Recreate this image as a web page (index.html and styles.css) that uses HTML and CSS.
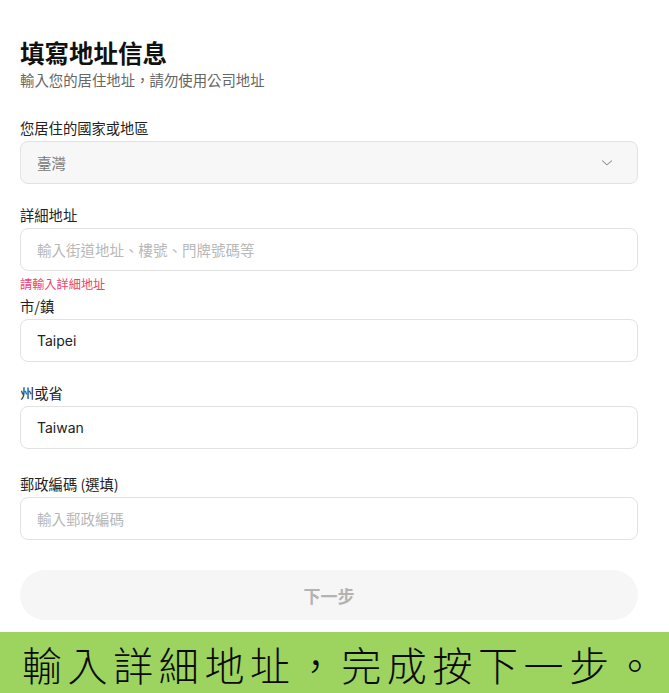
FILE: index.html
```html
<!DOCTYPE html>
<html lang="zh-Hant">
<head>
<meta charset="utf-8">
<title>填寫地址信息</title>
<link rel="stylesheet" href="styles.css">
</head>
<body>
<main class="page">
  <h1 class="title">填寫地址信息</h1>
  <p class="subtitle">輸入您的居住地址，請勿使用公司地址</p>

  <div class="field field-first">
    <div class="label">您居住的國家或地區</div>
    <div class="box select">
      <span class="select-value">臺灣</span>
      <svg class="chevron" width="12" height="8" viewBox="0 0 12 8"><path d="M1.5 1.8 L6 5.8 L10.5 1.8" fill="none" stroke="#9a9a9a" stroke-width="1.1" stroke-linecap="round" stroke-linejoin="round"/></svg>
    </div>
  </div>

  <div class="field">
    <div class="label">詳細地址</div>
    <div class="box input"><span class="placeholder">輸入街道地址、樓號、門牌號碼等</span></div>
    <div class="error">請輸入詳細地址</div>
  </div>

  <div class="field field-tight">
    <div class="label">市/鎮</div>
    <div class="box input"><span class="value">Taipei</span></div>
  </div>

  <div class="field">
    <div class="label">州或省</div>
    <div class="box input"><span class="value">Taiwan</span></div>
  </div>

  <div class="field field-wide">
    <div class="label">郵政編碼 (選填)</div>
    <div class="box input"><span class="placeholder">輸入郵政編碼</span></div>
  </div>

  <div class="button">下一步</div>
</main>
<footer class="caption">輸入詳細地址，完成按下一步。</footer>
</body>
</html>
```

FILE: styles.css
```css
html, body {
  margin: 0;
  padding: 0;
  background: #ffffff;
}
body {
  width: 669px;
  height: 693px;
  overflow: hidden;
  font-family: Inter, "Noto Sans CJK TC", sans-serif;
  color: #1a1a1a;
}
.page {
  width: 618px;
  margin-left: 20px;
  padding-top: 39px;
  height: 594px;
  box-sizing: border-box;
}
.title {
  margin: 0;
  font-size: 24.5px;
  line-height: 28px;
  font-weight: 700;
  color: #111;
  font-family: "Noto Sans CJK TC", sans-serif;
}
.subtitle {
  margin: 3px 0 0;
  font-size: 14.4px;
  line-height: 20px;
  color: #666;
  font-family: "Noto Sans CJK TC", sans-serif;
}
.field {
  margin-top: 21px;
}
.field-first {
  margin-top: 28px;
}
.field-tight {
  margin-top: 4px;
}
.field-wide {
  margin-top: 25px;
}
.label {
  font-size: 14.3px;
  line-height: 20px;
  color: #222;
  margin-bottom: 3px;
  font-family: "Noto Sans CJK TC", sans-serif;
}
.box {
  height: 43px;
  box-sizing: border-box;
  border: 1px solid #e2e2e2;
  border-radius: 8px;
  display: flex;
  align-items: center;
  padding: 0 16px;
  font-size: 14.5px;
}
.select {
  background: #f7f7f7;
  justify-content: space-between;
  padding-right: 24px;
}
.select-value {
  color: #777;
  font-family: "Noto Sans CJK TC", sans-serif;
}
.chevron {
  display: block;
}
.input {
  background: #fff;
}
.placeholder {
  color: #b8b8b8;
  font-family: "Noto Sans CJK TC", sans-serif;
}
.value {
  color: #222;
  font-size: 14px;
}
.error {
  margin-top: 5px;
  font-size: 12.2px;
  line-height: 16px;
  color: #f0416c;
  font-family: "Noto Sans CJK TC", sans-serif;
}
.button {
  margin-top: 30px;
  height: 50px;
  border-radius: 25px;
  background: #f6f6f6;
  display: flex;
  align-items: center;
  justify-content: center;
  font-size: 17px;
  font-weight: 700;
  color: #b3b3b3;
  font-family: "Noto Sans CJK TC", sans-serif;
}
.caption {
  margin-top: 38px;
  height: 61px;
  background: #9dd35f;
  display: flex;
  align-items: center;
  padding-left: 22px;
  padding-top: 2px;
  box-sizing: border-box;
  font-size: 40px;
  font-weight: 300;
  letter-spacing: 5.6px;
  color: #0a0a0a;
  font-family: "Noto Sans CJK TC", sans-serif;
  white-space: nowrap;
}
```
